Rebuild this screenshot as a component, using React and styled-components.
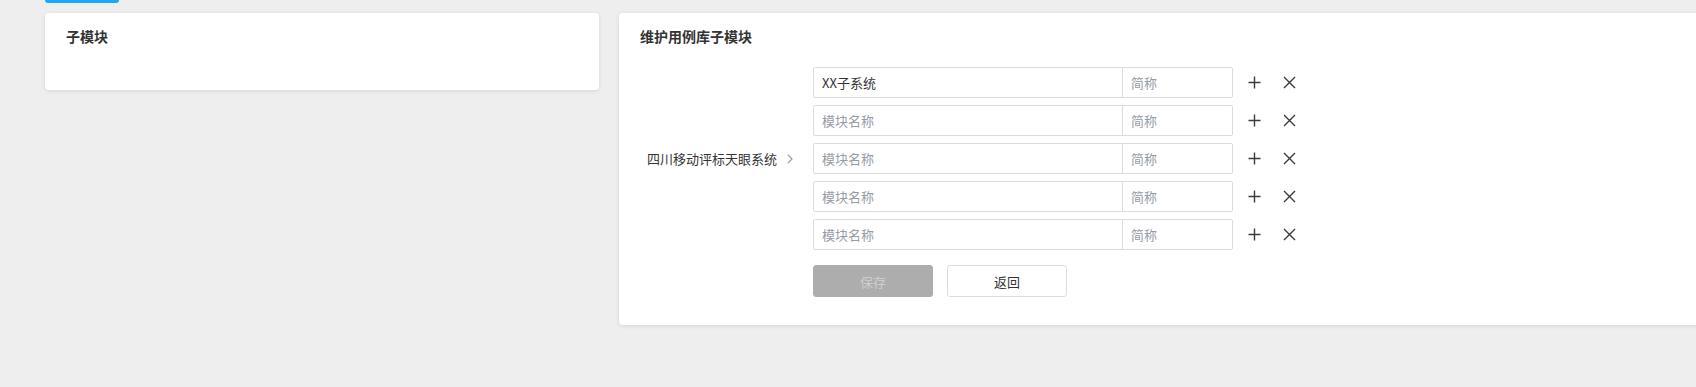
import React from 'react';
import styled, {createGlobalStyle} from 'styled-components';

const GlobalStyle = createGlobalStyle`
    body {
        margin: 0;
        background: #eeeeee;
        font-family: "Noto Sans CJK SC", "Noto Sans", sans-serif;
        color: #333333;
        overflow: hidden;
    }
`;

const rows = [
    {name: 'XX子系统', short: ''},
    {name: '', short: ''},
    {name: '', short: ''},
    {name: '', short: ''},
    {name: '', short: ''},
];

//Icons
const PlusIcon = () => (
    <svg width="13" height="13" viewBox="0 0 13 13">
        <path d="M6.5 0.5V12.5M0.5 6.5H12.5" stroke="#3a3a40" strokeWidth="1.4" fill="none" />
    </svg>
);

const CloseIcon = () => (
    <svg width="13" height="13" viewBox="0 0 13 13">
        <path d="M1 1L12 12M12 1L1 12" stroke="#3a3a40" strokeWidth="1.4" fill="none" />
    </svg>
);

const App = () => {
    return (
        <>
        <GlobalStyle />
        <Page>
            <TopBar>
                <TabButton />
            </TopBar>
            <Columns>
                <SideCard>
                    <CardTitle>子模块</CardTitle>
                    <SideBody />
                </SideCard>
                <MainCard>
                    <CardTitle>维护用例库子模块</CardTitle>
                    <FormArea>
                        <SystemLabel>
                            <span>四川移动评标天眼系统</span>
                            <Chevron viewBox="0 0 6 10">
                                <path d="M0.7 0.7L5 5L0.7 9.3" stroke="#9a9ca3" strokeWidth="1.2" fill="none" />
                            </Chevron>
                        </SystemLabel>
                        <FormColumn>
                            {rows.map((row, i) => (
                                <Row key={i}>
                                    <InputGroup>
                                        <NameInput defaultValue={row.name} placeholder="模块名称" />
                                        <ShortInput defaultValue={row.short} placeholder="简称" />
                                    </InputGroup>
                                    <Actions>
                                        <IconButton><PlusIcon /></IconButton>
                                        <IconButton><CloseIcon /></IconButton>
                                    </Actions>
                                </Row>
                            ))}
                            <ButtonRow>
                                <Button disabled>保存</Button>
                                <Button secondary>返回</Button>
                            </ButtonRow>
                        </FormColumn>
                    </FormArea>
                </MainCard>
            </Columns>
        </Page>
        </>
    );
};

const Page = styled.div`
    width: 100%;
    height: 387px;
    overflow: hidden;
    padding-left: 45px;
    box-sizing: border-box;
`;

const TopBar = styled.div`
    display: flex;
    height: 3px;
`;

const TabButton = styled.div`
    width: 74px;
    height: 3px;
    background: #1aa7ff;
    border-radius: 0 0 4px 4px;
`;

const Columns = styled.div`
    display: flex;
    align-items: flex-start;
    gap: 20px;
    margin-top: 10px;
`;

const Card = styled.div`
    background: #ffffff;
    border-radius: 4px;
    box-shadow: 0 1px 4px rgba(0, 0, 0, 0.1);
    padding: 14px 20px 0 21px;
    box-sizing: border-box;
`;

const SideCard = styled(Card)`
    flex: 0 0 554px;
`;

const SideBody = styled.div`
    height: 45px;
`;

const MainCard = styled(Card)`
    flex: 0 0 1120px;
    padding-bottom: 28px;
`;

const CardTitle = styled.h3`
    margin: 0;
    font-size: 14px;
    line-height: 18px;
    font-weight: bold;
    color: #333333;
`;

const FormArea = styled.div`
    display: flex;
    margin-top: 22px;
`;

const SystemLabel = styled.div`
    width: 173px;
    box-sizing: border-box;
    display: flex;
    align-items: center;
    justify-content: flex-end;
    gap: 10px;
    padding-right: 20px;
    height: 183px;
    font-size: 13px;
    color: #333333;
`;

const Chevron = styled.svg`
    width: 6px;
    height: 10px;
`;

const FormColumn = styled.div`
    display: flex;
    flex-direction: column;
    gap: 7px;
`;

const Row = styled.div`
    display: flex;
    align-items: center;
`;

const InputGroup = styled.div`
    display: flex;
    width: 420px;
    height: 31px;
    border: 1px solid #dcdcdc;
    border-radius: 2px;
    box-sizing: border-box;
`;

const BaseInput = styled.input`
    border: none;
    outline: none;
    font-family: inherit;
    font-size: 13px;
    color: #333333;
    padding: 0 8px;
    background: transparent;
    box-sizing: border-box;
    min-width: 0;
    &::placeholder {
        color: #969ca6;
    }
`;

const NameInput = styled(BaseInput)`
    flex: 1;
`;

const ShortInput = styled(BaseInput)`
    width: 110px;
    border-left: 1px solid #dcdcdc;
`;

const Actions = styled.div`
    display: flex;
    align-items: center;
    gap: 22px;
    margin-left: 15px;
`;

const IconButton = styled.span`
    display: flex;
    width: 13px;
    height: 13px;
    cursor: pointer;
`;

const ButtonRow = styled.div`
    display: flex;
    gap: 14px;
    margin-top: 8px;
`;

const Button = styled.button`
    width: 120px;
    height: 32px;
    border-radius: 3px;
    font-family: inherit;
    font-size: 13px;
    box-sizing: border-box;
    border: 1px solid ${props => props.secondary ? '#dcdce4' : '#adadad'};
    background: ${props => props.secondary ? '#ffffff' : '#adadad'};
    color: ${props => props.secondary ? '#333333' : '#cdcdcd'};
`;

export default App;
